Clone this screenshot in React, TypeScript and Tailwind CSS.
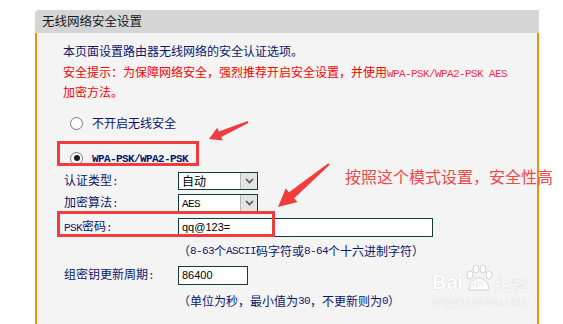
import type { ReactNode } from "react";

const M = ({ children }: { children: ReactNode }) => (
	<span className="font-['Liberation_Mono',monospace] text-[11px] tracking-[-0.6px]">{children}</span>
);

const Radio = ({ checked, children }: { checked?: boolean; children: ReactNode }) => (
	<div className="flex items-center h-[20px] pl-[33px] gap-[9px]">
		<span className="w-[13px] h-[13px] rounded-full border border-[#7a7a7a] bg-white flex items-center justify-center">
			{checked && <span className="w-[6px] h-[6px] rounded-full bg-[#1a1a1a]" />}
		</span>
		<span>{children}</span>
	</div>
);

const Select = ({ children }: { children: ReactNode }) => (
	<div className="w-[80px] h-[18px] border border-[#123c3c] bg-white flex items-center justify-between text-black">
		<span className="pl-[3px] leading-none">{children}</span>
		<span className="w-[17px] h-full bg-[#e3e3e3] border-l border-[#b5b5b5] flex items-center justify-center">
			<svg width="9" height="6" viewBox="0 0 9 6">
				<path d="M1 1 L4.5 4.5 L8 1" fill="none" stroke="#555" strokeWidth="1.6" />
			</svg>
		</span>
	</div>
);

const Row = ({ label, children }: { label: ReactNode; children: ReactNode }) => (
	<div className="flex items-center h-[22px] pl-[27px]">
		<div className="w-[114px]">{label}</div>
		{children}
	</div>
);

export default function App() {
	return (
		<div className="relative w-[563px] h-[324px] bg-white overflow-hidden pt-[10px] pl-[35px] font-['Noto_Sans_CJK_SC',sans-serif] text-[12px]">
			<div className="w-[504px] h-[314px] flex flex-col">
				<div className="h-[23px] bg-[#d5d5d5] rounded-tl-[4px] flex items-center pl-[7px] text-[12.5px] text-[#1a1a1a]">
					无线网络安全设置
				</div>
				<div className="flex-1 bg-[#f4f4f4] border-l-2 border-r-2 border-[#f0900c] text-[#0c1670]">
					<div className="pt-[9px] pl-[26px] leading-[17px]">
						<p>本页面设置路由器无线网络的安全认证选项。</p>
						<p className="mt-[4px] text-[#ff0000]">
							安全提示：为保障网络安全，强烈推荐开启安全设置，并使用
							<span className="text-[#f0304a]">
								<M>WPA-PSK/WPA2-PSK AES</M>
							</span>
						</p>
						<p className="text-[#ff0000]">加密方法。</p>
					</div>
					<div className="mt-[13px]">
						<Radio>不开启无线安全</Radio>
					</div>
					<div className="mt-[15px]">
						<Radio checked>
							<span className="font-bold">
								<M>WPA-PSK/WPA2-PSK</M>
							</span>
						</Radio>
					</div>
					<div className="mt-[2px]">
						<Row label={<>认证类型<M>:</M></>}>
							<Select>自动</Select>
						</Row>
						<Row label={<>加密算法<M>:</M></>}>
							<Select>
								<M>AES</M>
							</Select>
						</Row>
						<div className="mt-[2px]">
							<Row label={<><M>PSK</M>密码<M>:</M></>}>
								<div className="w-[255px] h-[19px] border border-[#123c3c] bg-white flex items-center pl-[3px] font-['Liberation_Sans',sans-serif] text-[11px] text-black">
									qq@123=
								</div>
							</Row>
						</div>
						<div className="mt-[3px] h-[20px] flex items-center pl-[141px]">
							（<M>8-63</M>个<M>ASCII</M>码字符或<M>8-64</M>个十六进制字符）
						</div>
						<div className="mt-[3px]">
							<Row label={<>组密钥更新周期<M>:</M></>}>
								<div className="w-[70px] h-[19px] border border-[#123c3c] bg-white flex items-center pl-[3px] font-['Liberation_Sans',sans-serif] text-[11px] text-black">
									86400
								</div>
							</Row>
						</div>
						<div className="mt-[5px] h-[20px] flex items-center pl-[141px]">
							（单位为秒，最小值为<M>30</M>，不更新则为<M>0</M>）
						</div>
					</div>
				</div>
			</div>

			{/* annotations laid over the screenshot */}
			<div className="absolute left-[57px] top-[141px] w-[142px] h-[25px] border-[3px] border-[#f03c3c]" />
			<div className="absolute left-[57px] top-[211px] w-[218px] h-[26px] border-[3px] border-[#f03c3c]" />
			<svg className="absolute left-0 top-0" width="563" height="324" viewBox="0 0 563 324">
				<polygon
					points="209,139 222.8,140.6 221.2,137 248.4,122.9 247.6,121.1 218.8,131.5 217.2,127.8"
					fill="#f03c3c"
				/>
				<polygon
					points="278,207 297.5,202.1 294.2,198.3 329.7,164.8 328.3,163.2 289,192.3 285.7,188.5"
					fill="#f03c3c"
				/>
			</svg>
			<div className="absolute left-[345px] top-[165px] text-[16px] leading-[22px] text-[#f04848] whitespace-nowrap">
				按照这个模式设置，安全性高
			</div>

			{/* baidu watermark */}
			<div className="absolute left-[432px] top-[262px] text-white [text-shadow:0_0_1px_#b8b8b8]">
				<div className="flex items-end h-[30px] gap-[2px]">
					<span className="font-['Liberation_Sans',sans-serif] font-bold text-[20px] leading-[20px]">Bai</span>
					<span className="relative w-[28px] h-[28px]">
						<svg className="absolute left-0 top-0" width="28" height="28" viewBox="0 0 28 28">
							<g fill="#fff" stroke="#c8c8c8" strokeWidth="0.8">
								<ellipse cx="5" cy="11" rx="3" ry="4" />
								<ellipse cx="11" cy="5" rx="3" ry="4" />
								<ellipse cx="18" cy="5" rx="3" ry="4" />
								<ellipse cx="24" cy="11" rx="3" ry="4" />
								<path d="M4 26 C4 18 10 14 14 14 C18 14 24 18 24 26 Z" />
							</g>
						</svg>
						<span className="absolute left-[5px] top-[14px] font-['Liberation_Sans',sans-serif] font-bold text-[11px] leading-[11px]">
							du
						</span>
					</span>
					<span className="text-[16px] leading-[18px]">经验</span>
				</div>
				<div className="font-['Liberation_Sans',sans-serif] text-[12px] leading-[14px] mt-[3px]">
					jingyan.baidu.com
				</div>
			</div>
		</div>
	);
}
